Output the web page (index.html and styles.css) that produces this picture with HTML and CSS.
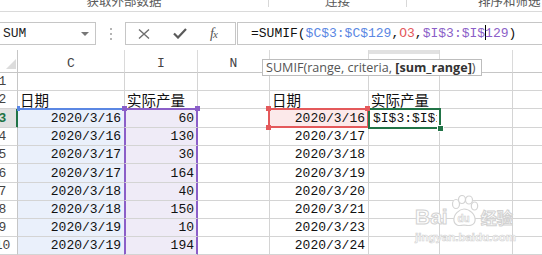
FILE: index.html
```html
<!DOCTYPE html>
<html lang="zh-CN">
<head>
    <meta charset="UTF-8">
    <title>SUMIF</title>
    <link rel="stylesheet" href="styles.css">
</head>
<body>

<div class="ribbon">
    <div class="group g1"><span>获取外部数据</span></div>
    <div class="group g2"><span>连接</span></div>
    <div class="group g3"><span>排序和筛选</span></div>
</div>

<div class="formula-row">
    <div class="namebox"><span>SUM</span><span class="caret"></span></div>
    <div class="grip"><span></span><span></span><span></span></div>
    <div class="fx-buttons">
        <svg class="btn-x" width="12" height="10" viewBox="0 0 12 10"><path d="M1 0.5 L11 9.5 M11 0.5 L1 9.5" stroke="#6f6f6f" stroke-width="1.4" fill="none"/></svg>
        <svg class="btn-ok" width="14" height="11" viewBox="0 0 14 11"><path d="M1 5.5 L5 9.5 L13 1" stroke="#5a5a5a" stroke-width="2.2" fill="none"/></svg>
        <span class="fx">f<i>x</i></span>
    </div>
    <div class="formula">=SUMIF(<span class="ref-c">$C$3:$C$129</span>,<span class="ref-o">O3</span>,<span class="ref-i">$I$3:$I$</span><span class="cursor"></span><span class="ref-i">129</span>)</div>
</div>

<div class="sheet">
    <div class="cell corner"><span class="tri"></span></div>
    <div class="cell ch">C</div>
    <div class="cell ch">I</div>
    <div class="cell ch">N</div>
    <div class="cell ch"></div>
    <div class="cell ch active-col"></div>
    <div class="cell ch"></div>
    <div class="cell ch">R</div>

    <div class="cell rh"><span>1</span></div>
    <div class="cell"></div><div class="cell"></div><div class="cell"></div><div class="cell"></div><div class="cell"></div><div class="cell"></div><div class="cell"></div>

    <div class="cell rh"><span>2</span></div>
    <div class="cell cjk edge-b">日期</div>
    <div class="cell cjk edge-p">实际产量</div>
    <div class="cell"></div>
    <div class="cell cjk">日期</div>
    <div class="cell cjk">实际产量</div>
    <div class="cell"></div><div class="cell"></div>

    <div class="cell rh rh-active"><span>3</span></div>
    <div class="cell num fill-b top">2020/3/16</div>
    <div class="cell num fill-p top">60</div>
    <div class="cell"></div>
    <div class="cell num crit">2020/3/16</div>
    <div class="cell editing"><span class="edit-text">$I$3:$I$129</span></div>
    <div class="cell"></div><div class="cell"></div>

    <div class="cell rh"><span>4</span></div>
    <div class="cell num fill-b">2020/3/16</div>
    <div class="cell num fill-p">130</div>
    <div class="cell"></div>
    <div class="cell num">2020/3/17</div>
    <div class="cell"></div><div class="cell"></div><div class="cell"></div>

    <div class="cell rh"><span>5</span></div>
    <div class="cell num fill-b">2020/3/17</div>
    <div class="cell num fill-p">30</div>
    <div class="cell"></div>
    <div class="cell num">2020/3/18</div>
    <div class="cell"></div><div class="cell"></div><div class="cell"></div>

    <div class="cell rh"><span>6</span></div>
    <div class="cell num fill-b">2020/3/17</div>
    <div class="cell num fill-p">164</div>
    <div class="cell"></div>
    <div class="cell num">2020/3/19</div>
    <div class="cell"></div><div class="cell"></div><div class="cell"></div>

    <div class="cell rh"><span>7</span></div>
    <div class="cell num fill-b">2020/3/18</div>
    <div class="cell num fill-p">40</div>
    <div class="cell"></div>
    <div class="cell num">2020/3/20</div>
    <div class="cell"></div><div class="cell"></div><div class="cell"></div>

    <div class="cell rh"><span>8</span></div>
    <div class="cell num fill-b">2020/3/18</div>
    <div class="cell num fill-p">150</div>
    <div class="cell"></div>
    <div class="cell num">2020/3/21</div>
    <div class="cell"></div><div class="cell"></div><div class="cell"></div>

    <div class="cell rh"><span>9</span></div>
    <div class="cell num fill-b">2020/3/19</div>
    <div class="cell num fill-p">10</div>
    <div class="cell"></div>
    <div class="cell num">2020/3/23</div>
    <div class="cell"></div><div class="cell"></div><div class="cell"></div>

    <div class="cell rh"><span>10</span></div>
    <div class="cell num fill-b">2020/3/19</div>
    <div class="cell num fill-p">194</div>
    <div class="cell"></div>
    <div class="cell num">2020/3/24</div>
    <div class="cell"></div><div class="cell"></div><div class="cell"></div>

    <div class="cell rh"><span>11</span></div>
    <div class="cell fill-b"></div>
    <div class="cell fill-p"></div>
    <div class="cell"></div><div class="cell"></div><div class="cell"></div><div class="cell"></div><div class="cell"></div>

    <!-- range handles -->
    <span class="handle h-blue"></span>
    <span class="handle h-purple h-p1"></span>
    <span class="handle h-purple h-p2"></span>
    <span class="handle h-red h-r1"></span>
    <span class="handle h-red h-r2"></span>
    <span class="handle h-red h-r3"></span>
    <span class="handle h-green"></span>

    <div class="tooltip">SUMIF(range, criteria, <b>[sum_range]</b>)</div>

    <div class="watermark">
        <div class="wm-top">
            <span class="wm-bai">Bai</span>
            <svg class="wm-paw" width="30" height="32" viewBox="0 0 30 32">
                <g fill="#fff" stroke="#d4d4d4" stroke-width="1.2">
                    <ellipse cx="7" cy="9" rx="3.5" ry="4.5"/>
                    <ellipse cx="13" cy="4.5" rx="3.5" ry="4"/>
                    <ellipse cx="20" cy="5" rx="3.5" ry="4"/>
                    <ellipse cx="25.5" cy="11" rx="3.2" ry="4"/>
                    <path d="M5 26 C4 19 11 14 15 14 C20 14 27 19 26 26 C25 31 20 31 15 30 C10 31 6 31 5 26 Z"/>
                </g>
                <text x="8.5" y="27" font-size="10" font-family="Liberation Sans" font-weight="bold" fill="#fff" stroke="#d0d0d0" stroke-width="0.6">du</text>
            </svg>
            <span class="wm-jy">经验</span>
        </div>
        <div class="wm-url">jingyan.baidu.com</div>
    </div>
</div>

</body>
</html>
```

FILE: styles.css
```css
body {
    margin: 0;
    width: 542px;
    height: 255px;
    overflow: hidden;
    background: #fff;
    font-family: "Liberation Mono", "Noto Sans CJK SC", monospace;
    font-size: 13px;
    color: #111;
}

/* ribbon group captions, cut at the top */
.ribbon {
    display: flex;
    height: 11px;
    border-bottom: 1px solid #dadada;
    overflow: hidden;
    font-family: "Noto Sans CJK SC", sans-serif;
    font-size: 12.5px;
    color: #5a5a5a;
}

.group {
    align-self: flex-start;
    height: 7px;
    border-right: 1px solid #d8d8d8;
    box-sizing: border-box;
}

.group span {
    display: block;
    margin-top: -7px;
    line-height: 16px;
}

.g1 {
    width: 269px;
    text-align: center;
    padding-right: 20px;
}

.g2 {
    width: 138px;
    text-align: center;
}

.g3 {
    flex: 1;
    border-right: none;
    padding-left: 71px;
}

/* formula bar */
.formula-row {
    display: flex;
    align-items: flex-start;
    height: 38px;
    padding-top: 10px;
    box-sizing: border-box;
}

.namebox {
    margin-left: -1px;
    width: 97px;
    height: 23px;
    border: 1px solid #c6c6c6;
    box-sizing: border-box;
    display: flex;
    align-items: center;
    justify-content: space-between;
    padding: 0 6px 0 3px;
    color: #222;
}

.caret {
    width: 0;
    height: 0;
    border-top: 4px solid #777;
    border-left: 4px solid transparent;
    border-right: 4px solid transparent;
}

.grip {
    margin: 6px 0 0 14px;
    width: 2px;
}

.grip span {
    display: block;
    width: 2px;
    height: 2px;
    margin-bottom: 3px;
    background: #b5b5b5;
}

.fx-buttons {
    margin-left: 13px;
    width: 111px;
    height: 23px;
    border: 1px solid #c6c6c6;
    box-sizing: border-box;
    display: flex;
    align-items: center;
}

.btn-x {
    margin-left: 12px;
}

.btn-ok {
    margin-left: 23px;
}

.fx {
    margin-left: 23px;
    font-family: "Liberation Serif", serif;
    font-style: italic;
    font-size: 14px;
    color: #555;
    letter-spacing: -1px;
}

.fx i {
    font-size: 11px;
}

.formula {
    flex: 1;
    margin-left: 1px;
    margin-right: -20px;
    height: 23px;
    border: 1px solid #c6c6c6;
    box-sizing: border-box;
    padding-left: 13px;
    line-height: 21px;
    white-space: nowrap;
    overflow: hidden;
    color: #111;
}

.ref-c {
    color: #5b87e3;
}

.ref-o {
    color: #e4595b;
}

.ref-i {
    color: #8b5fc8;
}

.cursor {
    display: inline-block;
    width: 1px;
    height: 15px;
    margin: 0 -1px 0 0;
    vertical-align: -3px;
    background: #000;
}

/* worksheet grid */
.sheet {
    position: relative;
    display: grid;
    grid-template-columns: 18px 107px 73px 72px 99px 71px 73px 110px;
    grid-template-rows: 23px 18px 18px 19px 18px 18px 19px 18px 18px 18px 18px 18px;
}

.cell {
    border-right: 1px solid #d4d4d4;
    border-bottom: 1px solid #d4d4d4;
    white-space: nowrap;
    overflow: hidden;
    display: flex;
    align-items: flex-end;
    padding: 0 3px 1px;
    line-height: 15px;
}

.corner {
    position: relative;
    padding: 0;
    border-color: #c6c6c6;
}

.tri {
    position: absolute;
    right: 1px;
    bottom: 3px;
    width: 0;
    height: 0;
    border-left: 10px solid transparent;
    border-bottom: 10px solid #dcdcdc;
}

.ch {
    justify-content: center;
    padding-bottom: 1px;
    color: #444;
    border-bottom-color: #c6c6c6;
    border-right-color: #dadada;
}

.active-col {
    background: linear-gradient(#e1e1e1 0, #e1e1e1 4px, #fff 4px);
}

.rh {
    padding: 0 0 1px;
    color: #444;
    border-right-color: #c6c6c6;
}

.rh span {
    display: block;
    width: 30px;
    margin-left: -12px;
    text-align: center;
}

.rh-active {
    background: #e1e1e1;
    border-right-color: #217346;
    box-shadow: inset -1px 0 #217346;
}

.rh-active span {
    color: #217346;
    font-weight: bold;
}

.cjk {
    font-family: "Noto Sans CJK SC", sans-serif;
    font-size: 14.5px;
    line-height: 17px;
    padding-bottom: 0;
    padding-left: 2px;
}

.num {
    justify-content: flex-end;
}

.fill-b {
    background: #eaf0fb;
    border-right-color: #8b5fc8;
}

.fill-p {
    background: #efebf7;
    border-right-color: #8b5fc8;
    box-shadow: inset 1px 0 #8b5fc8, inset -1px 0 #8b5fc8;
}

.fill-b.top {
    box-shadow: inset 0 1px #5b87e3;
}

.fill-p.top {
    box-shadow: inset 1px 0 #8b5fc8, inset -1px 0 #8b5fc8, inset 0 1px #8b5fc8;
}

.edge-b {
    border-bottom-color: #5b87e3;
}

.edge-p {
    border-bottom-color: #8b5fc8;
}

.crit {
    position: relative;
    overflow: visible;
    background: #fce9ea;
}

.crit::after {
    content: '';
    position: absolute;
    left: -2px;
    top: -1px;
    right: -1px;
    bottom: -1px;
    border: 2px solid #e4595b;
}

.editing {
    position: relative;
    overflow: visible;
    padding-left: 4px;
    padding-right: 0;
}

.edit-text {
    display: block;
    width: 64px;
    overflow: hidden;
}

.editing::after {
    content: '';
    position: absolute;
    left: -1px;
    top: -1px;
    right: -2px;
    bottom: -2px;
    border: 2px solid #217346;
}

/* small squares on the range corners */
.handle {
    position: absolute;
    width: 5px;
    height: 5px;
}

.h-blue {
    left: 17px;
    top: 56px;
    width: 3px;
    background: #5b87e3;
}

.h-purple {
    top: 56px;
    background: #8b5fc8;
}

.h-p1 {
    left: 122px;
}

.h-p2 {
    left: 195px;
}

.h-red {
    background: #e4595b;
}

.h-r1 {
    left: 266px;
    top: 56px;
}

.h-r2 {
    left: 266px;
    top: 75px;
}

.h-r3 {
    left: 365px;
    top: 56px;
}

.h-green {
    left: 437px;
    top: 75px;
    background: #217346;
    border: 1px solid #fff;
}

.tooltip {
    position: absolute;
    left: 262px;
    top: 9px;
    width: 220px;
    height: 17px;
    box-sizing: border-box;
    border: 1px solid #bdbdbd;
    background: #fff;
    padding-left: 3px;
    font-family: "Open Sans", sans-serif;
    font-size: 12.6px;
    line-height: 15px;
    color: #555;
    white-space: nowrap;
    overflow: hidden;
}

.tooltip b {
    color: #333;
}

.watermark {
    position: absolute;
    left: 415px;
    top: 143px;
    color: #fff;
    -webkit-text-stroke: 1px #d2d2d2;
}

.wm-top {
    display: flex;
    align-items: flex-end;
    height: 34px;
}

.wm-bai {
    font-family: "Liberation Sans", sans-serif;
    font-weight: bold;
    font-size: 21px;
    line-height: 20px;
}

.wm-paw {
    margin-left: 1px;
}

.wm-jy {
    margin-left: 2px;
    font-family: "Noto Sans CJK SC", sans-serif;
    font-weight: bold;
    font-size: 16px;
    line-height: 20px;
}

.wm-url {
    margin-top: 4px;
    font-family: "Liberation Sans", sans-serif;
    font-weight: bold;
    font-size: 11.5px;
    -webkit-text-stroke: 0.6px #d2d2d2;
}
```
